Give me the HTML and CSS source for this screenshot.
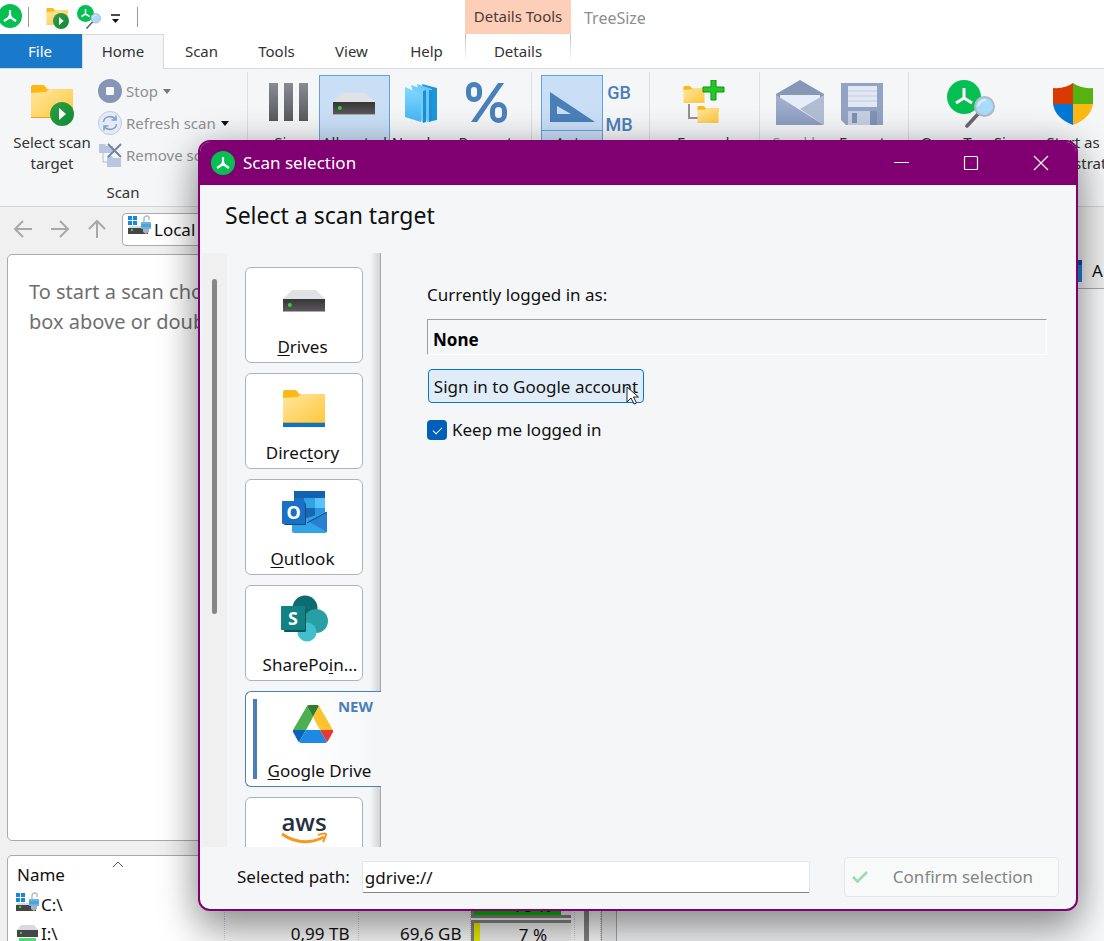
FILE: index.html
```html
<!DOCTYPE html>
<html lang="en">
<head>
<meta charset="utf-8">
<title>TreeSize</title>
<link rel="stylesheet" href="styles.css">
</head>
<body>
<svg class="defs" aria-hidden="true">
  <defs>
    <linearGradient id="gFolder" x1="0" y1="0" x2="1" y2="1"><stop offset="0" stop-color="#ffe6a0"/><stop offset="1" stop-color="#ffc83c"/></linearGradient>
    <linearGradient id="gGreen" x1="0" y1="0" x2="1" y2="1"><stop offset="0" stop-color="#2f9e44"/><stop offset="1" stop-color="#108a35"/></linearGradient>
    <linearGradient id="gDark" x1="0" y1="0" x2="0" y2="1"><stop offset="0" stop-color="#363636"/><stop offset="1" stop-color="#5e5a5e"/></linearGradient>
    <linearGradient id="gBar" x1="0" y1="0" x2="0" y2="1"><stop offset="0" stop-color="#868c93"/><stop offset="1" stop-color="#58595c"/></linearGradient>
    <linearGradient id="gPage" x1="0" y1="0" x2="0" y2="1"><stop offset="0" stop-color="#83d9ff"/><stop offset="1" stop-color="#45b5f2"/></linearGradient>
    <linearGradient id="gMail" x1="0" y1="0" x2="0" y2="1"><stop offset="0" stop-color="#a5b3cf"/><stop offset="1" stop-color="#8d9dc0"/></linearGradient>
    <symbol id="drive" viewBox="0 0 48 48">
      <path d="M12 13h24l9 9H3z" fill="#e1e2e5"/>
      <rect x="3" y="22" width="42" height="13" fill="url(#gDark)"/>
      <path d="M3 34.500h42" stroke="#a9a9ab"/>
      <circle cx="9.800" cy="28" r="2" fill="#2fd03a"/>
    </symbol>
    <symbol id="folder" viewBox="0 0 48 40">
      <path d="M3 4q0-2 2-2h10q2 0 4 4H45v8H3z" fill="#fbb917"/>
      <path d="M3 10l15-1 3-3h24v29H3z" fill="url(#gFolder)"/>
      <path d="M3 34.500h42" stroke="#e9a820"/>
    </symbol>
    <symbol id="play" viewBox="0 0 24 24">
      <circle cx="12" cy="12" r="12" fill="url(#gGreen)"/><path d="M9 6l7 6-7 6z" fill="#fff"/>
    </symbol>
    <symbol id="logo" viewBox="0 0 24 24">
      <circle cx="12" cy="12" r="12" fill="#06bf52"/>
      <path d="M12 6v7M12 13l-6 4M12 13l6 4" stroke="#fff" stroke-width="2.200" fill="none"/>
      <circle cx="12" cy="13" r="2" fill="#fff"/>
    </symbol>
    <symbol id="finder" viewBox="0 0 48 48">
      <circle cx="17" cy="17" r="17" fill="#06bf52"/>
      <path d="M17 8v10M17 18l-8 5M17 18l8 5" stroke="#fff" stroke-width="3" fill="none"/>
      <path d="M31 34L20 46" stroke="#66696f" stroke-width="3.500" stroke-linecap="round"/>
      <circle cx="37.500" cy="26.500" r="9.500" fill="#a9dcfb" stroke="#b3b9c4" stroke-width="2"/>
      <path d="M31 26q2-6 8-6" stroke="#d8f0ff" stroke-width="2" fill="none"/>
    </symbol>
    <symbol id="lockdrive" viewBox="0 0 24 20">
      <path d="M0 1h4v4H0zM5 1h4v4H5zM0 6h4v4H0zM5 6h4v4H5z" fill="#1787dc"/>
      <path d="M0 13l2-2h12v2z" fill="#d8dadd"/><rect y="13" width="20" height="6" fill="#444548"/>
      <circle cx="4" cy="15" r="1.200" fill="#2fd03a"/>
      <path d="M16 8V4q0-3 3-3 2 0 2 2v2" stroke="#b6bcc4" stroke-width="1.500" fill="none"/>
      <rect x="13" y="7" width="10" height="7" rx="1" fill="#4da3dc"/><path d="M13 8h10M13 13h10" stroke="#8ec2e6"/>
      <path d="M15 14h6v3l-3 2-3-2z" fill="#a8b0b9"/>
    </symbol>
  </defs>
</svg>

<div class="app">
  <header class="titlebar">
    <div class="quick">
      <svg class="q-logo" viewBox="0 0 24 24"><use href="#logo"/></svg>
      <span class="q-line"></span>
      <button class="q-btn" aria-label="Select scan target"><svg width="24" height="24"><use href="#folder" x="-1" y="2" width="24" height="20"/><use href="#play" x="7" y="8" width="16" height="16"/></svg></button>
      <button class="q-btn" aria-label="Open TreeSize"><svg width="24" height="24"><use href="#finder" width="24" height="24"/></svg></button>
      <button class="q-more" aria-label="Customize toolbar"><svg width="10" height="10"><path d="M0 1h9" stroke="#111" stroke-width="1.500"/><path d="M1 5h7l-3.500 4z" fill="#111"/></svg></button>
      <span class="q-line"></span>
    </div>
    <div class="context">Details Tools</div>
    <div class="app-title">TreeSize</div>
  </header>

  <nav class="tabs">
    <button class="tab tab-file">File</button>
    <button class="tab tab-home">Home</button>
    <button class="tab">Scan</button>
    <button class="tab">Tools</button>
    <button class="tab">View</button>
    <button class="tab">Help</button>
    <button class="tab tab-details">Details</button>
  </nav>

  <section class="ribbon">
    <div class="group group-scan">
      <div class="group-row">
        <button class="tool tool-target"><svg width="48" height="48"><use href="#folder" x="0" y="3" width="48" height="40"/><use href="#play" x="22" y="22" width="24" height="24"/></svg><span>Select scan<br>target</span></button>
        <div class="small-tools">
          <button class="small" disabled><svg width="24" height="24"><circle cx="12" cy="12" r="12" fill="#8694b5"/><rect x="8" y="8" width="8" height="8" rx="1" fill="#f7f9fc"/></svg>Stop<svg class="caret" width="8" height="5"><path d="M0 0h8L4 5z" fill="#777"/></svg></button>
          <button class="small" disabled><svg width="24" height="24"><circle cx="12" cy="12" r="11.500" fill="#e3ebf7" stroke="#bccbe2"/><path d="M5.500 11a6.500 6 0 0 1 12-2.500M18.500 13a6.500 6 0 0 1-12 2.500M18 4.500v4.500h-4.500M6 19.500V15h4.500" stroke="#8ba0c6" stroke-width="1.600" fill="none"/></svg>Refresh scan<svg class="caret" width="8" height="5"><path d="M0 0h8L4 5z" fill="#111"/></svg></button>
          <button class="small" disabled><svg width="24" height="24"><path d="M1 1h6l1 2h7v7H1z" fill="#b8c6e0"/><path d="M5 10v9h4" stroke="#b6bcc8" fill="none"/><path d="M9 13h5l1 2h8v9H9z" fill="#b8c6e0"/><path d="M10 1l13 13M23 1L10 14" stroke="#75839f" stroke-width="2"/></svg>Remove scan</button>
        </div>
      </div>
      <div class="group-name">Scan</div>
    </div>
    <div class="group group-mode">
      <button class="tool w62"><svg width="48" height="48"><path d="M5 3h9v38H5zM20 3h9v38h-9zM35 3h9v38h-9z" fill="url(#gBar)"/></svg><span>Size</span></button>
      <button class="tool w71 on"><svg width="48" height="48"><use href="#drive" x="-1" width="48" height="48"/></svg><span>Allocated</span></button>
      <button class="tool w62"><svg width="48" height="48"><path d="M25 4l15 4v32l-5 1z" fill="#1f96dc"/><path d="M20 4l15 5v32l-5 1z" fill="#69c8fa"/><path d="M32 10l3 0v31l-3 1z" fill="#1d8fd6"/><path d="M14 5l15 5v32l-4 0z" fill="#72cffd"/><path d="M26 11l3-1v32l-3 1z" fill="#1d8fd6"/><path d="M8 7l14 6q2 0 2 2v27L8 37z" fill="url(#gPage)"/></svg><span>Number</span></button>
      <button class="tool w67"><svg width="48" height="48"><g fill="none" stroke="#4a80b9" stroke-width="5"><rect x="6.500" y="4.500" width="11" height="15" rx="5.500"/><rect x="30.500" y="24.500" width="12" height="16" rx="6"/></g><path d="M36 3h6L15 42H9z" fill="#4a80b9"/></svg><span>Percent</span></button>
    </div>
    <div class="group group-unit">
      <button class="tool w62 on split"><svg width="48" height="48"><path fill-rule="evenodd" d="M2 12l45 30H2zM9 26v8h14z" fill="#4a7fb8"/></svg><span>Auto</span></button>
      <div class="units"><button class="unit">GB</button><button class="unit">MB</button></div>
    </div>
    <div class="group group-expand">
      <button class="tool"><svg width="48" height="48"><path d="M10 24v14h9" stroke="#939393" stroke-width="2" fill="none"/><use href="#folder" x="2" y="5" width="26" height="20"/><use href="#folder" x="16" y="25" width="26" height="20"/><path d="M32 0h5v7h8v5h-8v8h-5v-8h-8V7h8z" fill="#22c826" stroke="#12911b"/></svg><span>Expand</span></button>
    </div>
    <div class="group group-export">
      <button class="tool w62" disabled><svg width="48" height="48"><path d="M0 14L24 0l24 14v10H0z" fill="#8797b8"/><path d="M4 15h40v14H4z" fill="#e5edfa"/><path d="M0 15l48 30H0z" fill="url(#gMail)"/><path d="M48 15v30L24 29z" fill="#b1bdd2"/></svg><span>Send by</span></button>
      <button class="tool w62"><svg width="48" height="48"><path d="M3 3h42v42H8l-5-5z" fill="#93a3c3"/><rect x="10" y="6" width="29" height="21" fill="#e1e8f3"/><path d="M10 11h29M10 16h29M10 21h29" stroke="#c4cedf"/><rect x="10" y="31" width="22" height="14" fill="#c3cfe2"/><rect x="14" y="33" width="5" height="10" fill="#7f90b2"/><rect x="32" y="31" width="7" height="14" fill="#8192b5"/></svg><span>Export</span></button>
    </div>
    <div class="group group-admin">
      <button class="tool w102"><svg width="48" height="48"><use href="#finder" width="48" height="48"/></svg><span>Open TreeSize</span></button>
      <button class="tool w102"><svg width="48" height="48"><path d="M24 3v21H4V8q12 1 20-5z" fill="#d83b01"/><path d="M24 3v21h20V8Q32 9 24 3z" fill="#55b211"/><path d="M4 24h20v21Q6 38 4 24z" fill="#0078d4"/><path d="M24 24h20q-2 14-20 21z" fill="#fdb913"/></svg><span>Start as<br>Administrator</span></button>
    </div>
  </section>

  <div class="address">
    <button class="arrow" aria-label="Back"><svg width="20" height="20"><path d="M19 10H2M10 2l-8 8 8 8" /></svg></button>
    <button class="arrow" aria-label="Forward"><svg width="20" height="20"><path d="M1 10h17M10 2l8 8-8 8"/></svg></button>
    <button class="arrow" aria-label="Up"><svg width="20" height="20"><path d="M10 19V2M2 10l8-8 8 8"/></svg></button>
    <div class="combo"><svg width="24" height="20"><use href="#lockdrive" width="24" height="20"/></svg><span>Local</span></div>
  </div>

  <main class="work">
    <div class="left">
      <section class="tree">To start a scan choose a drive<br>box above or double-click</section>
      <section class="drives">
        <svg class="sort" width="12" height="7"><path d="M1 6l5-5 5 5" fill="none" stroke="#555"/></svg>
        <table class="drive-table">
          <thead><tr><th class="c-name">Name</th><th class="c-size"></th><th class="c-free"></th><th class="c-pct"></th><th></th></tr></thead>
          <tbody>
            <tr><td class="c-name"><span class="drive-name"><svg width="24" height="20"><use href="#lockdrive" width="24" height="20"/></svg>C:\</span></td><td class="c-size">932 GB</td><td class="c-free">698 GB</td><td class="c-pct"><div class="meter"><i class="fill green" style="width:90%"></i><span>75 %</span></div></td><td></td></tr>
            <tr><td class="c-name"><span class="drive-name"><svg width="24" height="20"><path d="M5 4h13l4 5H1z" fill="#d8dadd"/><rect x="1" y="9" width="21" height="7" fill="#444548"/><circle cx="5" cy="12" r="1.200" fill="#2fd03a"/><rect x="3" y="17" width="17" height="3" fill="#55d873"/></svg>I:\</span></td><td class="c-size">0,99 TB</td><td class="c-free">69,6 GB</td><td class="c-pct"><div class="meter"><i class="fill yellow" style="width:7%"></i><span>7 %</span></div></td><td></td></tr>
          </tbody>
        </table>
        <span class="drive-scroll"></span>
      </section>
    </div>
    <section class="right">
      <div class="right-tabs"><button class="right-tab"><svg width="12" height="22"><rect width="12" height="22" fill="#1683d8"/><rect width="12" height="5" fill="#0a4ca0"/></svg>A</button></div>
      <div class="right-body"></div>
    </section>
  </main>
</div>

<div class="dialog" role="dialog" aria-labelledby="dlg-title">
  <div class="dlg-bar">
    <svg class="dlg-logo" viewBox="0 0 24 24"><use href="#logo"/></svg>
    <span class="dlg-title" id="dlg-title">Scan selection</span>
    <button class="win" aria-label="Minimize"><svg width="16" height="16"><path d="M1 7.500h15"/></svg></button>
    <button class="win" aria-label="Maximize"><svg width="16" height="16"><rect x="1.500" y="1.500" width="13" height="13" rx="1"/></svg></button>
    <button class="win" aria-label="Close"><svg width="16" height="16"><path d="M1 1l14 14M15 1L1 15"/></svg></button>
  </div>
  <h1 class="heading">Select a scan target</h1>
  <div class="dlg-body">
    <aside class="side">
      <div class="scroll"><span class="thumb"></span></div>
      <div class="cards">
        <button class="card"><svg width="48" height="48"><use href="#drive" width="48" height="48"/></svg><span><u>D</u>rives</span></button>
        <button class="card"><svg width="48" height="48"><use href="#folder" y="5" width="48" height="40"/><rect x="3" y="40" width="42" height="4" fill="#0a74cc"/></svg><span>Direc<u>t</u>ory</span></button>
        <button class="card"><svg width="48" height="48"><rect x="14" y="2" width="31" height="30" rx="1" fill="#1f6fc0"/><rect x="14" y="2" width="31" height="7" fill="#1461b0"/><rect x="24" y="9" width="11" height="10" fill="#2fa3e6"/><rect x="35" y="9" width="10" height="10" fill="#55c4fa"/><rect x="24" y="19" width="11" height="11" fill="#1868b4"/><rect x="35" y="19" width="10" height="11" fill="#2c95de"/><path d="M12 30l15-1 20-6v19q0 2-2 2H14q-2 0-2-2z" fill="#30a4e4"/><path d="M47 23v20L28 32z" fill="#2a7fd0"/><path d="M47 23L27 34" stroke="#174a8c"/><rect x="4" y="14" width="22" height="22" rx="1" fill="#144a83"/><rect x="2" y="12" width="23" height="23" rx="1" fill="#1a70c4"/><text x="13.500" y="30" class="logo-letter">O</text></svg><span><u>O</u>utlook</span></button>
        <button class="card"><svg width="48" height="48"><circle cx="25" cy="13" r="12.500" fill="#0c6c70"/><circle cx="36" cy="26" r="12" fill="#279fa3"/><circle cx="27" cy="37" r="9.500" fill="#40bfcd"/><rect x="4" y="14" width="22" height="23" rx="1" fill="#09585c"/><rect x="1" y="11" width="24" height="24" rx="1" fill="#128184"/><text x="13" y="30" class="logo-letter">S</text></svg><span class="shift">SharePo<u>i</u>n...</span></button>
        <button class="card selected"><svg width="48" height="48"><path d="M17 5l6 11-7 13H3z" fill="#4caf50"/><path d="M17 5q1-1 2-1h8q1 0 2 1l-6 11z" fill="#2e7d32"/><path d="M29 5l14 24H30l-7-13z" fill="#fdc42f"/><path d="M3 29h13l-7 12-1-1-5-9z" fill="#0d62bd"/><path d="M16 29h14l7 12q-1 1-2 1H11q-1 0-2-1z" fill="#1e88e5"/><path d="M30 29h13v2l-5 9-1 1z" fill="#e53935"/></svg><span class="shift"><u>G</u>oogle Drive</span><b class="new">NEW</b></button>
        <button class="card" aria-label="Amazon S3"><svg width="48" height="48"><text x="24" y="24" class="aws">aws</text><path d="M2 27q20 14 42 3" stroke="#f7981d" stroke-width="3" fill="none"/><path d="M38 28q9-3 8 0t-3 7" stroke="#f7981d" stroke-width="2" fill="none"/></svg></button>
      </div>
    </aside>
    <div class="form">
      <label class="lbl" for="account">Currently logged in as:</label>
      <input class="account" id="account" value="None" readonly>
      <button class="sign">Sign in to Google account<svg class="cursor" width="14" height="20"><path d="M1 1v15l4-4 3 6 2.500-1-3-6h5z" fill="#fff" stroke="#222"/></svg></button>
      <label class="keep"><input type="checkbox" class="check" checked>Keep me logged in</label>
    </div>
  </div>
  <div class="dlg-foot">
    <label for="path">Selected path:</label>
    <input class="path" id="path" value="gdrive://">
    <button class="confirm" disabled><svg width="16" height="12"><path d="M1 6l4.500 4.500L15 1" fill="none" stroke="#9bdcaf" stroke-width="2.500"/></svg><span>Confirm selection</span></button>
  </div>
</div>
</body>
</html>
```
FILE: styles.css
```css
* { box-sizing: border-box; }
html, body { height: 100%; }
body {
  margin: 0;
  overflow: hidden;
  position: relative;
  background: #f0f0f0;
  color: #111;
  font: 17px/24px "Noto Sans", "Open Sans", sans-serif;
}
button, input { font: inherit; color: inherit; }
button { background: none; border: 0; padding: 0; margin: 0; }
svg { display: block; flex: none; }
.defs { position: absolute; width: 0; height: 0; }

.app { height: 100%; display: flex; flex-direction: column; }

/* Title bar */
.titlebar { flex: none; height: 34px; display: flex; background: #fff; font-size: 15px; }
.quick { width: 465px; flex: none; display: flex; align-items: center; overflow: hidden; }
.q-logo { width: 24px; height: 24px; margin: 0 6px 2px -2px; }
.q-line { width: 1px; height: 20px; background: #999; }
.q-btn { margin-left: 17px; }
.q-btn + .q-btn { margin-left: 7px; }
.q-more { margin: 4px 16px 0 10px; }
.context { width: 106px; flex: none; background: #fdceb8; text-align: center; line-height: 32px; color: #4b3c38; }
.app-title { padding-left: 13px; line-height: 36px; color: #8e8e8e; font-size: 16px; }

/* Tabs */
.tabs { flex: none; height: 35px; display: flex; background: #fff; border-bottom: 1px solid #d8dadc; font-size: 15px; color: #333; }
.tab { width: 75px; flex: none; height: 34px; }
.tab-file { width: 82px; padding-right: 2px; background: #1979ca; color: #fff; }
.tab-home { width: 82px; height: 35px; padding-bottom: 2px; background: #f4f6f8; border: 1px solid #d8dadc; border-bottom: 0; }
.tab-details { width: 106px; margin-left: 1px; border: solid; border-width: 0 1px; border-image: linear-gradient(#bbb, #fff 80%) 1; }

/* Ribbon */
.ribbon { flex: none; height: 138px; display: flex; background: #f4f6f8; border-bottom: 1px solid #d2d4d6; overflow: hidden; color: #333; font-size: 15px; line-height: 21px; }
.group { position: relative; flex: none; display: flex; align-items: flex-start; padding-top: 6px; }
.group + .group::before { content: ""; position: absolute; left: 0; top: 3px; bottom: 6px; width: 1px; background: #dcdee0; }
.group-scan { width: 247px; flex-direction: column; }
.group-row { display: flex; height: 107px; }
.group-name { width: 246px; text-align: center; }
.group-mode { width: 284px; padding-left: 10px; }
.group-unit { width: 118px; padding-left: 10px; }
.group-expand { width: 110px; padding-left: 27px; }
.group-export { width: 149px; padding-left: 10px; }
.group-admin { flex: 1; padding-left: 12px; }
.tool { display: flex; flex-direction: column; align-items: center; height: 110px; padding-top: 4px; line-height: 21px; border: 1px solid transparent; white-space: nowrap; }
.tool span { margin-top: 4px; }
.tool:disabled { color: #999; }
.tool-target { width: 98px; margin-left: 3px; }
.w62 { width: 62px; }
.w67 { width: 67px; }
.w71 { width: 71px; }
.w102 { width: 102px; }
.on { background: #c9dff6; border-color: #62a2e4; }
.split { background: linear-gradient(#c9dff6 54px, #62a2e4 54px 55px, #c9dff6 55px); }
.units { display: flex; flex-direction: column; padding-top: 4px; }
.unit { width: 32px; height: 32px; padding-bottom: 4px; text-align: center; color: #4a80b9; font: 500 18px/28px Roboto, sans-serif; }
.small-tools { display: flex; flex-direction: column; gap: 8px; padding-top: 4px; margin-left: -3px; }
.small { display: flex; align-items: center; gap: 4px; color: #8d8f92; white-space: nowrap; height: 24px; }
.caret { margin-left: 1px; }

/* Address bar */
.address { flex: none; height: 42px; display: flex; align-items: center; padding: 2px 44px 0 13px; }
.arrow { width: 37px; }
.arrow svg { fill: none; stroke: #a8a8a8; stroke-width: 2; }
.combo { flex: 1; height: 33px; display: flex; align-items: center; gap: 2px; padding: 0 5px; margin-left: -2px; background: #fff; border: 1px solid #aaa; border-radius: 4px; }
.combo svg { margin-bottom: 8px; }
.combo span { padding-top: 2px; }

/* Work area */
.work { flex: 1; min-height: 0; display: flex; padding-top: 5px; }
.left { width: 602px; flex: none; padding-left: 7px; display: flex; flex-direction: column; }
.tree { flex: 1; background: #fff; border: 1px solid #aaa; border-radius: 5px; padding: 22px 21px; color: #6f6f6f; font-size: 20px; line-height: 30px; }
.drives { position: relative; flex: none; height: 86px; margin-top: 14px; background: #fff; border: 1px solid #aaa; border-bottom: 0; border-radius: 5px 5px 0 0; overflow: hidden; }
.sort { position: absolute; left: 104px; top: 5px; }
.drive-table { width: 100%; table-layout: fixed; border-collapse: collapse; }
.drive-table th { height: 34px; padding: 4px 0 0 9px; text-align: left; font-weight: 400; }
.drive-table td { height: 29px; padding: 0 8px 0 0; text-align: right; border-right: 1px dotted #c4d4e4; }
.drive-table .c-name { width: 216px; }
.drive-table .c-size { width: 134px; }
.drive-table .c-free { width: 112px; }
.drive-table td.c-pct, .drive-table th.c-pct { width: 104px; padding: 0; }
.drive-name { display: flex; align-items: center; gap: 1px; padding-left: 8px; }
.drive-name svg { margin-bottom: 6px; }
.meter { position: relative; height: 27px; border: 3px solid #888; border-right: 0; text-align: center; background: #f4f4f4; line-height: 23px; margin: 0 3px 0 0; }
.fill { position: absolute; left: 0; top: 0; bottom: 0; }
.green { background: #00c400; }
.yellow { background: #f0f000; }
.meter span { position: relative; margin-left: 22px; }
.drive-scroll { position: absolute; right: 12px; top: 0; bottom: 0; width: 5px; background: #868686; }
.right { flex: 1; min-width: 0; margin-left: 14px; display: flex; flex-direction: column; }
.right-tabs { flex: none; height: 35px; display: flex; overflow: hidden; padding-left: 454px; border-bottom: 1px solid #aaa; }
.right-tab { display: flex; align-items: center; gap: 10px; white-space: nowrap; }
.right-body { flex: 1; background: #f8f9fa; border-left: 1px solid #aaa; }

/* Dialog window */
.dialog {
  position: absolute;
  inset: 140px 26px 30px 198px;
  display: flex;
  flex-direction: column;
  overflow: hidden;
  background: #f4f6f8;
  border: 2px solid #800071;
  border-radius: 12px;
  box-shadow: 0 24px 40px rgba(0, 0, 0, .28), 0 4px 36px rgba(0, 0, 0, .28);
}
.dlg-bar { flex: none; height: 43px; display: flex; align-items: center; background: #800071; color: #fff; padding-left: 11px; }
.dlg-logo { width: 24px; height: 24px; margin-bottom: 2px; }
.dlg-title { flex: 1; margin-left: 8px; padding-bottom: 2px; }
.win { width: 70px; height: 43px; padding-bottom: 2px; display: flex; align-items: center; justify-content: center; }
.win svg { fill: none; stroke: #fff; stroke-width: 1.2; }
.heading { flex: none; margin: 0; height: 68px; padding: 15px 25px 0; font-size: 23px; line-height: 30px; font-weight: 400; }
.dlg-body { flex: 1; min-height: 0; display: flex; }
.side { flex: none; width: 181px; height: 100%; display: flex; overflow: hidden; padding-left: 2px; background: linear-gradient(to left, #a8a8a8 1px, #d2d3d4 1px, #f4f6f8 11px); }
.scroll { width: 25px; flex: none; background: #f0f0f0; padding: 26px 0 0 10px; }
.thumb { display: block; width: 5px; height: 335px; background: #868686; border-radius: 3px; }
.cards { flex: none; width: 154px; padding: 14px 0 0 18px; display: flex; flex-direction: column; gap: 10px; }
.card { position: relative; flex: none; width: 118px; height: 96px; display: flex; flex-direction: column; align-items: center; gap: 10px; padding-top: 9px; background: #fff; border: 1px solid #b0b2b4; border-radius: 6px; line-height: 24px; white-space: nowrap; }
.card span { margin-right: 3px; }
.card .shift { margin: 0 0 0 12px; }
.card u { text-underline-offset: 2px; text-decoration-thickness: 1px; }
.selected { width: 136px; border-color: #4a80b9; border-right: 0; border-radius: 6px 0 0 6px; background: linear-gradient(to right, #fff 40%, #f4f6f8); }
.selected::before { content: ""; position: absolute; left: 7px; top: 7px; bottom: 7px; width: 4px; background: #4a80b9; }
.new { position: absolute; right: 8px; top: 4px; font-size: 15px; line-height: 20px; color: #4a80b9; }
.logo-letter { font: 700 18px "Noto Sans", sans-serif; fill: #fff; text-anchor: middle; }
.aws { font: 600 24px "Open Sans", "Noto Sans", sans-serif; fill: #252f3e; text-anchor: middle; }

.form { flex: 1; min-width: 0; display: flex; flex-direction: column; align-items: flex-start; padding: 30px 29px 0 46px; }
.account { width: 100%; height: 36px; margin-top: 12px; padding: 5px 5px 0; background: none; border: 1px solid; border-color: #a0a0a0 #fff #fff #a0a0a0; font-weight: 700; color: #000; outline: 0; }
.sign { position: relative; height: 34px; margin: 14px 0 0 1px; padding-top: 1px; width: 216px; background: #e0edf9; border: 1px solid #0078d4; border-radius: 4px; white-space: nowrap; }
.cursor { position: absolute; right: 3px; top: 16px; }
.keep { display: flex; align-items: center; gap: 5px; margin-top: 15px; }
.check { appearance: none; position: relative; width: 20px; height: 20px; margin: 0; background: #005fb8; border-radius: 4px; }
.check::after { content: ""; position: absolute; left: 8px; top: 5px; width: 4px; height: 8px; border: solid #fff; border-width: 0 1px 1px 0; transform: rotate(45deg); }

.dlg-foot { flex: none; height: 62px; display: flex; align-items: center; padding: 0 17px 2px 37px; }
.path { flex: 1; min-width: 0; height: 32px; margin: 0 34px 0 12px; padding: 0 2px; background: #fff; border: 1px solid #e6e6e6; border-bottom-color: #858585; border-radius: 2px; }
.confirm { width: 215px; height: 40px; display: flex; align-items: center; background: #f8faf9; border: 1px solid #e6e8e8; border-radius: 4px; color: #858585; padding-left: 7px; }
.confirm span { flex: 1; text-align: center; }
```
